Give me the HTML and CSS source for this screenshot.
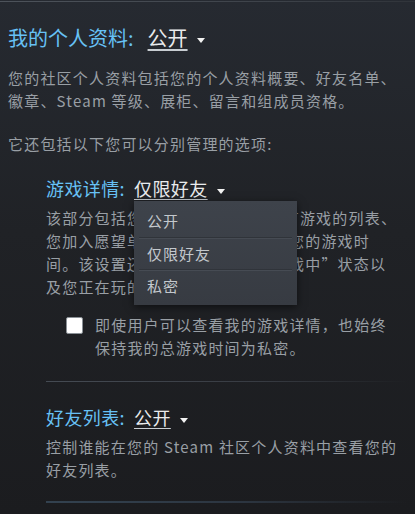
FILE: index.html
```html
<!DOCTYPE html>
<html lang="zh-CN">
<head>
  <meta charset="UTF-8">
  <meta name="viewport" content="width=device-width, initial-scale=1.0">
  <title>隐私设置</title>
  <link rel="stylesheet" href="styles.css">
</head>
<body>
  <div class="topline"></div>

  <h2 class="privacy-head">我的个人资料:<span class="privacy-select">公开</span></h2>
  <p class="text intro">您的社区个人资料包括您的个人资料概要、好友名单、徽章、Steam 等级、展柜、留言和组成员资格。</p>
  <p class="text also">它还包括以下您可以分别管理的选项:</p>

  <div class="subsection">
    <h3 class="privacy-head sub">游戏详情:<span class="select-wrap"><span class="privacy-select">仅限好友</span>
        <div class="dropdown">
          <div class="dropdown-item">公开</div>
          <div class="dropdown-item">仅限好友</div>
          <div class="dropdown-item">私密</div>
        </div>
      </span></h3>
    <p class="text desc">该部分包括您 Steam 帐户中的所有游戏的列表、您加入愿望单的游戏、您的成就及您的游戏时间。该设置还控制您是否显示“游戏中”状态以及您正在玩的游戏。</p>

    <label class="check-row">
      <span class="checkbox"></span>
      <span class="check-text">即使用户可以查看我的游戏详情，也始终保持我的总游戏时间为私密。</span>
    </label>

    <div class="divider"></div>

    <h3 class="privacy-head sub friends">好友列表:<span class="privacy-select">公开</span></h3>
    <p class="text desc">控制谁能在您的 Steam 社区个人资料中查看您的好友列表。</p>

    <div class="divider thick"></div>
  </div>
</body>
</html>
```

FILE: styles.css
```css
* {
  box-sizing: border-box;
}

html, body {
  height: 100%;
}

body {
  margin: 0;
  padding: 0 8px;
  overflow: hidden;
  font-family: "Noto Sans CJK SC", "Noto Sans", sans-serif;
  color: #999fa5;
  background: linear-gradient(180deg, #262a31 0%, #202226 45%, #1b1c1f 100%);
}

.topline {
  height: 1px;
  margin: 1px -8px 0;
  background: linear-gradient(90deg, #4d535b, #3c4148 70%, #30343a);
}

.privacy-head {
  margin: 22px 0 0;
  font-size: 20px;
  line-height: 28px;
  font-weight: 400;
  color: #67c1f5;
}

.privacy-head.sub {
  margin-top: 20px;
  font-size: 18px;
  line-height: 26px;
  letter-spacing: 0.4px;
}

.privacy-head.friends {
  margin-top: 22px;
}

.privacy-select {
  margin-left: 14px;
  color: #e9ebed;
  text-decoration: underline;
  text-decoration-color: #c8cdd2;
  text-underline-offset: 3px;
}

.privacy-select::after {
  content: "";
  display: inline-block;
  margin-left: 9px;
  vertical-align: middle;
  border-left: 4px solid transparent;
  border-right: 4px solid transparent;
  border-top: 5px solid #f2f2f2;
}

.sub .privacy-select {
  margin-left: 9px;
}

.select-wrap {
  position: relative;
}

.text {
  margin: 0;
  font-size: 15px;
  line-height: 23px;
  letter-spacing: 1.2px;
}

.intro {
  margin-top: 14px;
}

.also {
  margin-top: 20px;
}

.subsection {
  padding-left: 38px;
  padding-right: 7px;
}

.desc {
  margin-top: 5px;
}

.check-row {
  display: flex;
  align-items: flex-start;
  gap: 12px;
  margin: 15px 0 0 20px;
  font-size: 15px;
  line-height: 23px;
  letter-spacing: 1.2px;
}

.checkbox {
  flex: none;
  width: 17px;
  height: 17px;
  margin-top: 4px;
  background: #fff;
  border: 1px solid #8a9096;
  border-radius: 2px;
}

.divider {
  height: 1px;
  margin-top: 22px;
  margin-right: -7px;
  background: linear-gradient(90deg, #454b53, #373b42 60%, rgba(40, 42, 46, 0));
}

.divider.thick {
  height: 2px;
  margin-top: 20px;
  background: linear-gradient(90deg, #334250, #2c3540 55%, rgba(30, 32, 36, 0));
}

.dropdown {
  position: absolute;
  left: 9px;
  top: 26px;
  width: 163px;
  padding: 4px 0;
  background: linear-gradient(180deg, #3e434b, #373b42);
  box-shadow: 0 2px 8px rgba(0, 0, 0, 0.55);
  letter-spacing: 0;
  z-index: 10;
}

.dropdown-item {
  margin: 0 5px;
  padding-left: 8px;
  height: 32px;
  font-size: 15px;
  line-height: 32px;
  letter-spacing: 1px;
  color: #c3c8cd;
}

.dropdown-item + .dropdown-item {
  border-top: 1px solid #30343a;
  box-shadow: inset 0 1px 0 #464b53;
  line-height: 31px;
}
```
